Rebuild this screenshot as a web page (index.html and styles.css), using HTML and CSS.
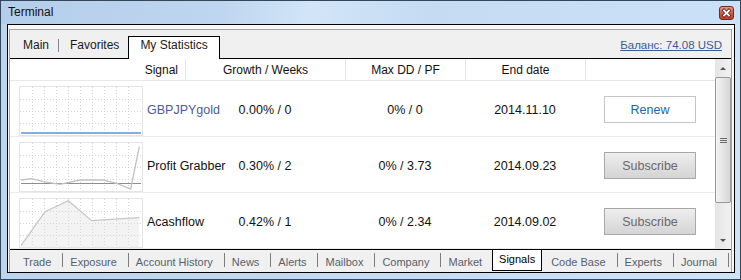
FILE: index.html
```html
<!DOCTYPE html>
<html lang="en">
<head>
  <meta charset="UTF-8" />
  <title>Terminal</title>
  <link rel="stylesheet" href="styles.css">
</head>
<body>
  <div class="window">
    <div class="titlebar">
      <span class="title">Terminal</span>
      <span class="close">
        <svg width="13" height="12" viewBox="0 0 13 12">
          <path d="M4 3.5L9 8.5M9 3.5L4 8.5" stroke="#6a2015" stroke-width="3.4" stroke-linecap="square"/>
          <path d="M4 3.5L9 8.5M9 3.5L4 8.5" stroke="#fff" stroke-width="1.8" stroke-linecap="square"/>
        </svg>
      </span>
    </div>

    <div class="client">
      <div class="panel">
        <div class="tabs">
          <span class="tab">Main</span>
          <span class="sep"></span>
          <span class="tab">Favorites</span>
          <span class="tab active">My Statistics</span>
          <a class="balance">Баланс: 74.08 USD</a>
        </div>

        <div class="grid">
          <div class="table">
            <div class="head">
              <div class="h-signal">Signal</div>
              <div>Growth / Weeks</div>
              <div>Max DD / PF</div>
              <div>End date</div>
              <div></div>
            </div>

            <div class="row">
              <div class="chart">
                <svg width="122" height="48">
                  <path class="grid-lines" d="M12.5 0V48M24.5 0V48M36.5 0V48M48.5 0V48M60.5 0V48M72.5 0V48M84.5 0V48M96.5 0V48M108.5 0V48M0 12.5H122M0 24.5H122M0 36.5H122"/>
                  <path d="M1 46H121" stroke="#7eb0e6" stroke-width="2"/>
                </svg>
              </div>
              <div class="name link">GBPJPYgold</div>
              <div class="val">0.00% / 0</div>
              <div class="val">0% / 0</div>
              <div class="val">2014.11.10</div>
              <div class="act"><button class="btn btn-renew">Renew</button></div>
            </div>

            <div class="row">
              <div class="chart">
                <svg width="122" height="48">
                  <path class="grid-lines" d="M12.5 0V48M24.5 0V48M36.5 0V48M48.5 0V48M60.5 0V48M72.5 0V48M84.5 0V48M96.5 0V48M108.5 0V48M0 12.5H122M0 24.5H122M0 36.5H122"/>
                  <path d="M1 40.5H121" stroke="#8e8e8e" stroke-width="1"/>
                  <polyline points="1,37 11.7,35.7 23.3,38.7 40,41.3 60,37 83.3,37 96.7,40.3 110.7,46 119.3,3.7" fill="none" stroke="#c2c2c2" stroke-width="1.3"/>
                </svg>
              </div>
              <div class="name">Profit Grabber</div>
              <div class="val">0.30% / 2</div>
              <div class="val">0% / 3.73</div>
              <div class="val">2014.09.23</div>
              <div class="act"><button class="btn btn-sub">Subscribe</button></div>
            </div>

            <div class="row">
              <div class="chart">
                <svg width="122" height="48">
                  <polygon points="1,46.7 25,12.7 48.3,1.7 71.7,21.7 119.3,18.7 119.3,48 1,48" fill="#f3f3f3"/>
                  <path class="grid-lines" d="M12.5 0V48M24.5 0V48M36.5 0V48M48.5 0V48M60.5 0V48M72.5 0V48M84.5 0V48M96.5 0V48M108.5 0V48M0 12.5H122M0 24.5H122M0 36.5H122"/>
                  <polyline points="1,46.7 25,12.7 48.3,1.7 71.7,21.7 119.3,18.7" fill="none" stroke="#c6c6c6" stroke-width="1.3"/>
                </svg>
              </div>
              <div class="name">Acashflow</div>
              <div class="val">0.42% / 1</div>
              <div class="val">0% / 2.34</div>
              <div class="val">2014.09.02</div>
              <div class="act"><button class="btn btn-sub">Subscribe</button></div>
            </div>
          </div>

          <div class="scrollbar">
            <div class="arrow"><span class="tri-up"></span></div>
            <div class="thumb"><span class="grip"></span></div>
            <div class="track"></div>
            <div class="arrow down"><span class="tri-down"></span></div>
          </div>
        </div>

        <div class="bottom-tabs">
          <span class="btab">Trade</span><span class="bsep"></span>
          <span class="btab">Exposure</span><span class="bsep"></span>
          <span class="btab">Account History</span><span class="bsep"></span>
          <span class="btab">News</span><span class="bsep"></span>
          <span class="btab">Alerts</span><span class="bsep"></span>
          <span class="btab">Mailbox</span><span class="bsep"></span>
          <span class="btab">Company</span><span class="bsep"></span>
          <span class="btab">Market</span>
          <span class="btab active">Signals</span>
          <span class="btab">Code Base</span><span class="bsep"></span>
          <span class="btab">Experts</span><span class="bsep"></span>
          <span class="btab">Journal</span><span class="bsep"></span>
        </div>
      </div>
    </div>
  </div>
</body>
</html>
```

FILE: styles.css
```css
* {
  box-sizing: border-box;
}

body {
  margin: 0;
  font-family: "Liberation Sans", Arial, sans-serif;
  color: #111;
}

.window {
  width: 741px;
  height: 280px;
  border: 1px solid #33465a;
  background: linear-gradient(to right, #bcd4ee, #c6dcf3 55%, #d0e4f8);
  display: flex;
  flex-direction: column;
}

.titlebar {
  height: 23px;
  display: flex;
  align-items: center;
  padding: 0 6px 0 7px;
  font-size: 12px;
  line-height: 23px;
  background: linear-gradient(100deg, #b4cdea 0%, #bed6ef 30%, #d2e5f8 42%, #c4dbf2 58%, #cbe1f8 100%);
}

.close {
  margin-left: auto;
  width: 15px;
  height: 14px;
  border: 1px solid #6e2a1f;
  border-radius: 3px;
  background: linear-gradient(#e59a86, #cf5a42 50%, #c0402a);
  display: flex;
  align-items: center;
  justify-content: center;
}

.close svg {
  display: block;
}

.client {
  margin: 0 5px 6px 6px;
  height: 249px;
  border: 1px solid #000;
  background: #f8f8f8;
  padding: 4px 2px 0 1px;
}

.panel {
  height: 100%;
  border: 1px solid #a3a3a3;
  border-bottom: none;
  background: #f0f0f0;
  display: flex;
  flex-direction: column;
}

/* top tabs */
.tabs {
  height: 29px;
  flex-shrink: 0;
  border-bottom: 1px solid #000;
  display: flex;
  align-items: flex-end;
  padding-left: 12px;
  font-size: 12px;
}

.tab {
  height: 23px;
  margin-bottom: -1px;
  border: 1px solid transparent;
  border-bottom: none;
  line-height: 17px;
  padding-bottom: 5px;
  color: #1b1b1b;
}

.tab.active {
  background: #fff;
  border-color: #000;
  padding: 0 11px 5px;
  margin-left: 8px;
}

.tabs .sep {
  flex-shrink: 0;
  width: 1px;
  height: 13px;
  background: #8a8a8a;
  margin: 0 10px 6px 8px;
}

.balance {
  margin-left: auto;
  margin-right: 9px;
  line-height: 17px;
  padding-bottom: 4px;
  font-size: 11.5px;
  color: #3a5a9e;
  text-decoration: underline;
}

/* signals table */
.grid {
  height: 190px;
  flex-shrink: 0;
  display: flex;
  background: #fff;
}

.table {
  flex: 1;
  overflow: hidden;
}

.head {
  display: grid;
  grid-template-columns: 175px 160px 120px 120px 1fr;
  height: 22px;
  border-bottom: 1px solid #e8e8e8;
  font-size: 12px;
}

.head > div {
  padding-top: 2px;
  line-height: 19px;
  text-align: center;
  border-left: 1px solid #e6e6e6;
}

.head > .h-signal {
  text-align: right;
  padding-right: 7px;
  border-left: none;
}

.row {
  display: grid;
  grid-template-columns: 137px 38px 160px 120px 120px 1fr;
  height: 56px;
  padding-top: 2px;
  border-bottom: 1px solid #ececec;
  align-items: center;
  font-size: 12.5px;
}

.chart {
  align-self: end;
  margin-left: 9px;
  width: 124px;
  height: 50px;
  border: 1px solid #e4e4e4;
}

.chart svg {
  display: block;
}

.grid-lines {
  stroke: #d6d6d6;
  stroke-width: 1;
  stroke-dasharray: 1 2;
  fill: none;
}

.name {
  white-space: nowrap;
  padding-top: 2px;
  line-height: 15px;
}

.name.link {
  color: #4b5b9c;
}

.val {
  text-align: center;
  padding-top: 2px;
  line-height: 15px;
}

.act {
  display: flex;
  justify-content: center;
}

.btn {
  width: 92px;
  height: 27px;
  font-family: inherit;
  font-size: 12.5px;
  padding: 0;
  border-radius: 0;
}

.btn-renew {
  background: #fff;
  border: 1px solid #c4c4c4;
  color: #1f64a6;
}

.btn-sub {
  background: linear-gradient(#eeeeee, #d4d4d4);
  border: 1px solid #a8a8a8;
  color: #6a6a6a;
}

/* scrollbar */
.scrollbar {
  width: 16px;
  display: flex;
  flex-direction: column;
  background: linear-gradient(to right, #e4e4e4, #f2f2f2);
}

.arrow {
  height: 18px;
  display: flex;
  justify-content: center;
  align-items: center;
}

.arrow.down {
  height: 17px;
}

.tri-up {
  border-left: 3px solid transparent;
  border-right: 3px solid transparent;
  border-bottom: 3px solid #555;
}

.tri-down {
  border-left: 3px solid transparent;
  border-right: 3px solid transparent;
  border-top: 3px solid #555;
}

.thumb {
  height: 126px;
  border: 1px solid #979797;
  border-radius: 2px;
  background: linear-gradient(to right, #f4f4f4, #e2e2e2 60%, #d6d6d6);
  display: flex;
  justify-content: center;
  align-items: center;
}

.grip {
  width: 7px;
  height: 5px;
  border-top: 1px solid #6b6b6b;
  border-bottom: 1px solid #6b6b6b;
  background: linear-gradient(#6b6b6b, #6b6b6b) center / 7px 1px no-repeat;
}

.track {
  flex: 1;
}

/* bottom tabs */
.bottom-tabs {
  height: 23px;
  flex-shrink: 0;
  border-top: 1px solid #000;
  display: flex;
  align-items: flex-start;
  padding-left: 13px;
  font-size: 11px;
  color: #56606c;
  overflow: hidden;
}

.btab {
  flex-shrink: 0;
  margin-top: 5px;
  line-height: 15px;
  white-space: nowrap;
}

.btab.active {
  margin: -1px 9px 0 10px;
  padding: 3px 6px;
  border: 1px solid #000;
  border-top: none;
  background: #fff;
  color: #000;
}

.bsep {
  flex-shrink: 0;
  width: 1px;
  height: 14px;
  background: #7d7d7d;
  margin: 3px 7px 0 11px;
}
```
